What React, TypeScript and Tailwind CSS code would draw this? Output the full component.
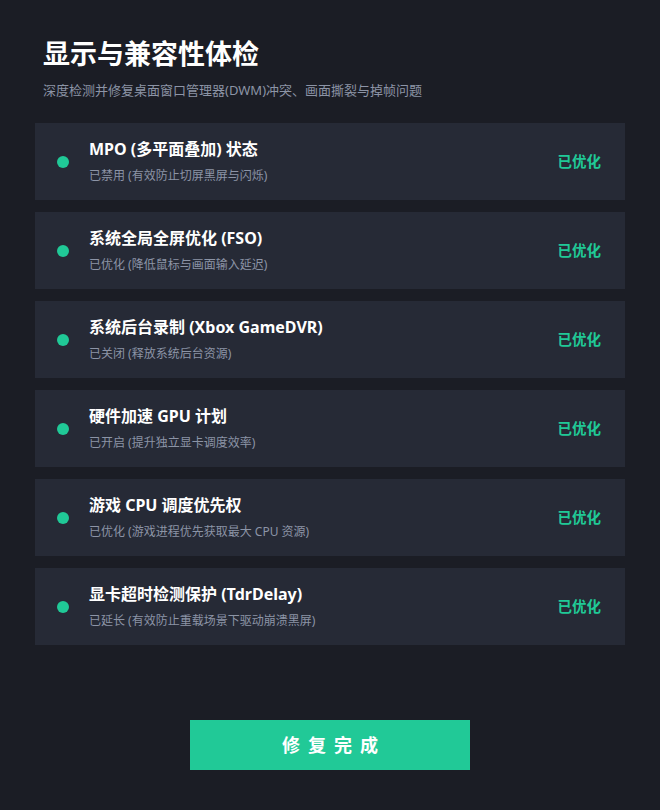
const items = [
  { title: "MPO (多平面叠加) 状态", desc: "已禁用 (有效防止切屏黑屏与闪烁)" },
  { title: "系统全局全屏优化 (FSO)", desc: "已优化 (降低鼠标与画面输入延迟)" },
  { title: "系统后台录制 (Xbox GameDVR)", desc: "已关闭 (释放系统后台资源)" },
  { title: "硬件加速 GPU 计划", desc: "已开启 (提升独立显卡调度效率)" },
  { title: "游戏 CPU 调度优先权", desc: "已优化 (游戏进程优先获取最大 CPU 资源)" },
  { title: "显卡超时检测保护 (TdrDelay)", desc: "已延长 (有效防止重载场景下驱动崩溃黑屏)" },
];

const App = () => {
  return (
    <div
      className="min-h-[810px] w-full bg-[#1b1d25] px-[35px] pt-[35px] text-white"
      style={{ fontFamily: '"Noto Sans", "Noto Sans CJK SC", sans-serif' }}
    >
      <div className="px-2">
        <h1 className="text-[27px] font-bold leading-[38px]">显示与兼容性体检</h1>
        <p className="mt-[7px] text-[13px] leading-[20px] text-[#8c94a6]">
          深度检测并修复桌面窗口管理器(DWM)冲突、画面撕裂与掉帧问题
        </p>
      </div>

      <div className="mt-[23px] flex flex-col gap-[12px]">
        {items.map((item, index) => (
          <div key={index} className="flex h-[77px] items-center bg-[#262a36] pl-[22px] pr-[24px]">
            <span className="h-[12px] w-[12px] shrink-0 rounded-full bg-[#20c997]" />
            <div className="ml-[20px] flex-1">
              <div className="text-[16px] font-bold leading-[22px]">{item.title}</div>
              <div className="mt-[7px] text-[12px] leading-[18px] text-[#8c94a6]">{item.desc}</div>
            </div>
            <span className="text-[14.5px] font-bold text-[#20c997]">已优化</span>
          </div>
        ))}
      </div>

      <div className="mt-[75px] flex justify-center">
        <button
          type="button"
          className="h-[50px] w-[280px] bg-[#21c997] pl-[8px] text-[18px] font-bold tracking-[8px] text-white"
        >
          修复完成
        </button>
      </div>
    </div>
  );
};

export default App;
